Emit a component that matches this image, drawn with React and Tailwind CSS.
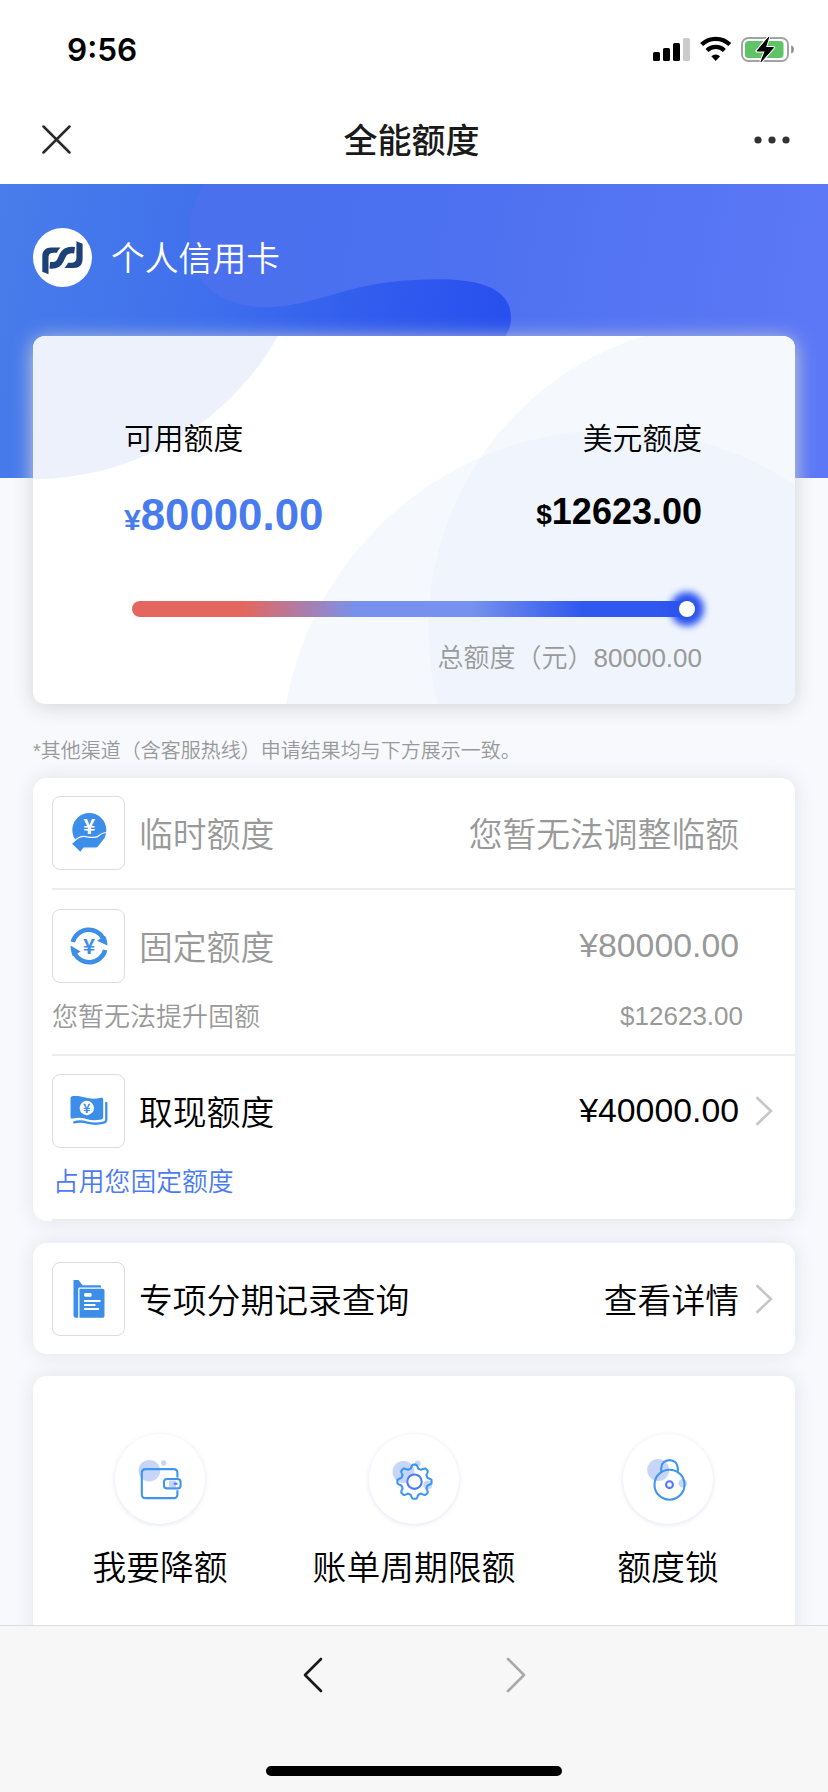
import { clsx } from 'clsx';

const BLUE = '#3d8ee9';

// status bar glyphs: signal, wifi, charging battery
const StatusIcons = () => (
  <svg width="144" height="30" viewBox="0 0 144 30" fill="none">
    <rect x="3" y="17" width="7" height="9" rx="1.6" fill="#000" />
    <rect x="13" y="13" width="7" height="13" rx="1.6" fill="#000" />
    <rect x="23" y="8" width="7" height="18" rx="1.6" fill="#000" />
    <rect x="33" y="3" width="7" height="23" rx="1.6" fill="#cbcbcb" />
    <path d="M51.6 9.6a20 20 0 0 1 28.2 0" stroke="#000" strokeWidth="4.2" />
    <path d="M57 15.4a12.4 12.4 0 0 1 17.4 0" stroke="#000" strokeWidth="4.2" />
    <path d="M61.3 21.2a6.3 6.3 0 0 1 8.800 0L65.700 26z" fill="#000" />
    <rect x="92" y="3" width="46" height="23" rx="6.5" stroke="#a2a2a2" strokeWidth="1.9" />
    <rect x="95" y="6" width="38.5" height="17" rx="3.5" fill="#5fc466" />
    <path d="M141.2 10.2c1.8.7 2.7 2.2 2.7 4.2s-.9 3.500-2.700 4.200z" fill="#8e8e8e" />
    <path
      d="M118.800 2 107 16h8.200l-4.200 10.800L123.600 12.600h-8.200z"
      fill="#000"
      stroke="#fff"
      strokeWidth="3"
      strokeLinejoin="round"
    />
    <path d="M118.800 2 107 16h8.200l-4.200 10.800L123.600 12.600h-8.200z" fill="#000" stroke="#000" strokeWidth="1" strokeLinejoin="round" />
  </svg>
);

const BankLogo = () => (
  <svg width="59" height="59" viewBox="0 0 59 59" fill="none">
    <circle cx="29.5" cy="29.5" r="29.5" fill="#fff" />
    <path
      d="M9.300 43.800V28.500c0-5.800 3.400-9 8.800-9h9.400c-1.500 1.500-2.800 3.400-3.600 5.300h-3.200c-3.400 0-5.200 1.600-5.200 4.500v17z"
      fill="#1d4077"
    />
    <path
      d="M49.600 15.800v15.300c0 5.800-3.400 9-8.800 9h-9.400c1.500-1.500 2.800-3.400 3.600-5.300h3.200c3.400 0 5.200-1.600 5.200-4.500v-17z"
      fill="#1d4077"
    />
    <path
      d="M16.800 38.300c5.600.6 8.200-1.200 10.200-5.600l2.400-5.600c2.200-4.800 5.600-6.400 12-5.500"
      stroke="#fff"
      strokeWidth="7.800"
    />
    <path
      d="M16.800 37.300c5.600.6 8.600-.8 10.600-5l2.400-5c2.200-4.600 5.600-6 11.800-5.100"
      stroke="#1d4077"
      strokeWidth="6.600"
    />
  </svg>
);

const HeroBackground = () => (
  <svg className="absolute inset-x-0 top-0" width="828" height="294" viewBox="0 0 828 294">
    <defs>
      <linearGradient id="heroBase" gradientUnits="userSpaceOnUse" x1="0" y1="0" x2="510" y2="90">
        <stop offset="0" stopColor="#487dea" />
        <stop offset="0.42" stopColor="#4070ed" />
        <stop offset="0.75" stopColor="#315cee" />
        <stop offset="1" stopColor="#2850ee" />
      </linearGradient>
      <linearGradient id="heroBlob" gradientUnits="userSpaceOnUse" x1="190" y1="0" x2="828" y2="110">
        <stop offset="0" stopColor="#4a70ed" />
        <stop offset="0.35" stopColor="#4b70f0" />
        <stop offset="1" stopColor="#5c78f6" />
      </linearGradient>
    </defs>
    <rect width="828" height="294" fill="url(#heroBase)" />
    <path
      d="M205 0C184 28 187 70 200 94c14 20 36 29 66 29 48 0 80-24 148-27 52-3 97 2 97 38 0 18-12 26-34 48v112h351V0z"
      fill="url(#heroBlob)"
    />
  </svg>
);

const CardBackground = () => (
  <svg className="absolute inset-0" width="762" height="368" viewBox="0 0 762 368">
    <defs>
      <clipPath id="cardArc">
        <circle cx="701.700" cy="292.400" r="306.200" />
      </clipPath>
    </defs>
    <circle cx="0" cy="-138.400" r="281.400" fill="#edf1fc" />
    <circle cx="701.700" cy="292.400" r="306.200" fill="#f5f8fd" />
    <circle cx="579.300" cy="425.400" r="331.300" fill="#f5f8fd" />
    <circle cx="579.300" cy="425.400" r="331.300" fill="#f0f5fd" clipPath="url(#cardArc)" />
  </svg>
);

const YenText = ({ x, y, size, fill }) => (
  <text
    x={x}
    y={y}
    fontSize={size}
    fill={fill}
    textAnchor="middle"
    fontWeight="700"
    fontFamily="Noto Sans CJK SC, sans-serif"
  >
    ¥
  </text>
);

const TempIcon = () => (
  <svg width="40" height="40" viewBox="0 0 40 40">
    <circle cx="20.300" cy="17" r="17" fill={BLUE} />
    <YenText x="20.300" y="20.500" size="20.500" fill="#fff" />
    <path
      d="M2.200 30.800L8.400 25.400C11 23.400 15 23.200 18.200 23.800C22 24.400 26 25 28.600 23.600C31 21.600 34 18.800 38 20L36.200 25L29.600 33.600Q28.600 35.200 26.600 35.200H14.800L11.500 39.600z"
      fill={BLUE}
      stroke="#fff"
      strokeWidth="1.200"
      strokeLinejoin="round"
    />
  </svg>
);

const FixedIcon = () => (
  <svg width="40" height="40" viewBox="0 0 40 40">
    <path d="M3.800 16a16.600 16.600 0 0 1 30.800-3.300" fill="none" stroke={BLUE} strokeWidth="4.600" />
    <path d="M28 14.800l8-5c1.600 2.800 2.400 6 2.400 9.600z" fill={BLUE} />
    <path d="M36.200 24A16.600 16.600 0 0 1 5.400 27.300" fill="none" stroke={BLUE} strokeWidth="4.600" />
    <path d="M11.500 25.500L4 30.400C2.400 27.400 1.600 24 1.600 19.600z" fill={BLUE} />
    <YenText x="20" y="27.500" size="20.500" fill={BLUE} />
  </svg>
);

const CashIcon = () => (
  <svg width="40" height="40" viewBox="0 0 40 40">
    <path
      d="M1.500 7.500c0-1.600 1-2.500 2.800-2.500 5-.3 8 .3 12 1.600 5 1.600 10 1.300 15.700.2 1.500-.3 2.200.3 2.200 1.500v18c0 1.300-.7 2-2 2.300-5.500 1.200-10 1-15-.6-4.500-1.500-8.500-1.500-13.200-.5-1.600.4-2.500-.2-2.500-1.600z"
      fill={BLUE}
    />
    <circle cx="17.800" cy="17" r="7.200" fill="#fff" />
    <YenText x="17.800" y="21.500" size="12.500" fill={BLUE} />
    <path d="M37.300 12v16.500c0 2-1 2.800-2.800 3.200-5 1.300-11 1.300-16 0-5-1.500-9-1.600-13.300-.4" fill="none" stroke={BLUE} strokeWidth="2.300" strokeLinecap="round" />
  </svg>
);

const RecordIcon = () => (
  <svg width="40" height="40" viewBox="0 0 40 40">
    <path d="M4.500 1h5l4 5.200h17.300c.8 0 1.200.4 1.200 1.200v1H10.800c-1 0-1.600.6-1.600 1.600v28.700H7c-1.600 0-2.500-.9-2.500-2.500z" fill={BLUE} />
    <path d="M10.500 9.700h22.700c1.500 0 2.300.8 2.300 2.300v24.400c0 1.500-.8 2.300-2.300 2.300H10.500z" fill={BLUE} />
    <rect x="15.200" y="14" width="7.400" height="3.800" rx="1.200" fill="#fff" />
    <path d="M15.800 22h15M15.800 26h10M15.800 30h13.400" stroke="#fff" strokeWidth="1.900" strokeLinecap="round" />
  </svg>
);

const WalletIcon = () => (
  <svg className="-m-px" width="92" height="92" viewBox="0 0 92 92" fill="none">
    <circle cx="35.300" cy="37.700" r="10.800" fill="#c6d5f8" />
    <circle cx="49.700" cy="30" r="2.700" fill="#c6d5f8" />
    <path
      d="M63.400 44.500V40c0-2.400-1.400-3.900-3.900-3.900H31.700c-2.500 0-3.900 1.500-3.900 3.900v21.200c0 2.400 1.400 3.900 3.900 3.900h27.800c2.500 0 3.900-1.500 3.900-3.900v-4"
      stroke="#3f95f0"
      strokeWidth="2.100"
    />
    <rect x="50" y="46" width="16.600" height="9.400" rx="3" fill="#fff" stroke="#3f95f0" strokeWidth="2.100" />
    <rect x="55" y="47.500" width="7" height="6.500" fill="#c6d5f8" />
    <path d="M59.800 50.700h3.600" stroke="#4d70ff" strokeWidth="2" />
  </svg>
);

// eight rounded teeth traced around the hub
const gearPoints = Array.from({ length: 180 }, (_, i) => {
  const a = (i * Math.PI) / 90;
  const wave = Math.max(-1, Math.min(1, Math.cos(a * 8) * 1.5));
  const r = 15.3 + 1.8 * wave;
  return `${(46.5 + r * Math.cos(a)).toFixed(2)},${(48.7 + r * Math.sin(a)).toFixed(2)}`;
}).join(' ');

const GearIcon = () => (
  <svg className="-m-px" width="92" height="92" viewBox="0 0 92 92" fill="none">
    <circle cx="35.500" cy="39" r="11" fill="#c6d5f8" />
    <circle cx="49.800" cy="30.500" r="2.900" fill="#c6d5f8" />
    <circle cx="59.800" cy="52" r="4.500" fill="#c6d5f8" />
    <polygon points={gearPoints} stroke="#3f95f0" strokeWidth="2.100" strokeLinejoin="round" />
    <circle cx="46.500" cy="48.700" r="7.200" fill="#fff" stroke="#4d7afc" strokeWidth="2.100" />
  </svg>
);

const LockIcon = () => (
  <svg className="-m-px" width="92" height="92" viewBox="0 0 92 92" fill="none">
    <circle cx="36.200" cy="37" r="11" fill="#c6d5f8" />
    <circle cx="60.800" cy="50.300" r="4.300" fill="#c6d5f8" />
    <circle cx="47.500" cy="51.700" r="15" stroke="#3f95f0" strokeWidth="2.100" />
    <path d="M39.200 39.300v-4c0-5 3.600-8.200 8.300-8.200s8.300 3.200 8.300 8.200v4" stroke="#3f95f0" strokeWidth="2.100" />
    <circle cx="47.500" cy="51.700" r="3.400" stroke="#4d7afc" strokeWidth="2.100" />
  </svg>
);

const Chevron = () => (
  <svg width="18" height="30" viewBox="0 0 18 30" fill="none">
    <path d="M1.500 1.200L16 15 1.500 28.800" stroke="#c6c6cb" strokeWidth="2.600" />
  </svg>
);

const RowHeader = ({ icon, title, value, muted, arrow, numeric }) => (
  <div className={clsx('flex items-center', muted ? 'text-[#999]' : 'text-black')}>
    <div className="flex h-[74px] w-[73px] shrink-0 items-center justify-center rounded-lg border border-[#dcdcdc]">
      {icon}
    </div>
    <span className="ml-[14px] pt-[3px] text-[33.8px] leading-[48px]">{title}</span>
    <span className={clsx('ml-auto text-[33.8px] leading-[48px]', numeric ? 'pb-[2px]' : 'pt-[3px]')}>{value}</span>
    <div className="flex w-[56px] justify-start pl-4">{arrow && <Chevron />}</div>
  </div>
);

const actions = [
  { label: '我要降额', icon: <WalletIcon /> },
  { label: '账单周期限额', icon: <GearIcon /> },
  { label: '额度锁', icon: <LockIcon /> },
];

export default function App() {
  return (
    <div className="flex h-[1792px] w-[828px] flex-col overflow-hidden bg-[#f7f9fd] font-['Liberation_Sans','Noto_Sans_CJK_SC',sans-serif] font-[350] text-black">
      {/* Status bar */}
      <div className="flex h-[100px] shrink-0 items-center justify-between bg-white pr-[34px] pl-[67px]">
        <span className="font-[Inter,sans-serif] text-[31.5px] leading-10 font-semibold">9:56</span>
        <StatusIcons />
      </div>

      {/* Title bar */}
      <div className="flex h-[84px] shrink-0 items-start justify-between bg-white pr-[38px] pl-[42px]">
        <svg className="mt-[25px]" width="29" height="29" viewBox="0 0 29 29">
          <path d="M1.500 1.500l26 26M27.500 1.500l-26 26" stroke="#2a2a2a" strokeWidth="2.500" strokeLinecap="round" />
        </svg>
        <h1 className="mt-[17px] mr-[2px] text-[34px] leading-[48px] font-medium text-[#1a1a1a]">全能额度</h1>
        <svg className="mt-9" width="36" height="8" viewBox="0 0 36 8" fill="#333">
          <circle cx="4" cy="4" r="3.600" />
          <circle cx="18" cy="4" r="3.600" />
          <circle cx="32" cy="4" r="3.600" />
        </svg>
      </div>

      {/* Page body */}
      <main className="relative flex-1 overflow-hidden">
        <HeroBackground />
        <div className="relative px-[33px]">
          <div className="flex items-center gap-[19px] pt-[44px] text-white">
            <BankLogo />
            <span className="pt-[3px] text-[33.8px] leading-[48px]">个人信用卡</span>
          </div>

          {/* Limit summary */}
          <section className="relative mt-[49px] h-[368px] rounded-xl bg-white shadow-[0_3px_20px_#d4d4d4]">
            <div className="absolute inset-0 overflow-hidden rounded-xl">
              <CardBackground />
            </div>
            <div className="relative pt-[82px] pr-[93px] pl-[91px]">
              <div className="flex justify-between text-[29.800px] leading-[42px]">
                <span>可用额度</span>
                <span>美元额度</span>
              </div>
              <div className="flex h-[75px] justify-between pt-[25px] font-bold">
                <span className="text-[43.800px] leading-[60px] text-[#487bee]">
                  <span className="text-[30px]">¥</span>80000.00
                </span>
                <span className="text-[36px] leading-[54px]">
                  <span className="text-[28px]">$</span>12623.00
                </span>
              </div>
              <div className="mt-[66px] ml-2 flex h-4 w-[563px] justify-end rounded-full bg-[linear-gradient(90deg,#e4675f_20%,#7792ee_40%,#7792ee_60%,#3058ee_80%)]">
                <div className="h-4 w-4 rounded-full bg-white shadow-[0_0_7px_9px_#2b53ee]" />
              </div>
              <p className="mt-[21px] text-right text-[26px] leading-10 text-[#999]">总额度（元）80000.00</p>
            </div>
          </section>

          <p className="mt-[33px] text-[20px] leading-[28px] text-[#999]">
            *其他渠道（含客服热线）申请结果均与下方展示一致。
          </p>

          <section className="mt-[13px] h-[443px] rounded-[14px] bg-white pl-[19px] shadow-[0_0_20px_#e2e3e8]">
            <div className="h-[112px] border-b-2 border-[#ececee] pt-[18px]">
              <RowHeader icon={<TempIcon />} title="临时额度" value="您暂无法调整临额" muted />
            </div>
            <div className="h-[166px] border-b-2 border-[#ececee] pt-[19px] text-[#999]">
              <RowHeader icon={<FixedIcon />} title="固定额度" value="¥80000.00" muted numeric />
              <div className="mt-[13px] flex justify-between pr-[52px] text-[26px] leading-10">
                <span className="pt-px">您暂无法提升固额</span>
                <span>$12623.00</span>
              </div>
            </div>
            <div className="h-[165px] border-b-2 border-[#ececee] pt-[18px]">
              <RowHeader icon={<CashIcon />} title="取现额度" value="¥40000.00" arrow numeric />
              <p className="mt-[14px] ml-px text-[25.8px] leading-10 text-[#4a7bf5]">占用您固定额度</p>
            </div>
          </section>

          <section className="mt-[22px] h-[111px] rounded-[14px] bg-white pt-[19px] pl-[19px] shadow-[0_0_20px_#e2e3e8]">
            <RowHeader icon={<RecordIcon />} title="专项分期记录查询" value="查看详情" arrow />
          </section>

          <section className="mt-[22px] grid h-[300px] grid-cols-3 rounded-[14px] bg-white pt-[58px] shadow-[0_0_20px_#e2e3e8]">
            {actions.map((item) => (
              <div key={item.label} className="flex flex-col items-center">
                <div className="h-[90px] w-[90px] rounded-full bg-white shadow-[0_1px_5px_#e2e3f6]">{item.icon}</div>
                <span className="mt-[20px] text-[33.800px] leading-[48px]">{item.label}</span>
              </div>
            ))}
          </section>
        </div>
      </main>

      {/* Browser toolbar */}
      <footer className="relative h-[167px] shrink-0 border-t border-[#dcdddf] bg-[#f7f7f7]">
        <div className="flex justify-center gap-[183px] pt-[31px]">
          <svg width="20" height="36" viewBox="0 0 20 36" fill="none">
            <path d="M18 2L2 18l16 16" stroke="#1a1a1a" strokeWidth="2.600" strokeLinecap="round" strokeLinejoin="round" />
          </svg>
          <svg width="20" height="36" viewBox="0 0 20 36" fill="none">
            <path d="M2 2l16 16L2 34" stroke="#a9a9a9" strokeWidth="2.600" strokeLinecap="round" strokeLinejoin="round" />
          </svg>
        </div>
        <div className="mx-auto mt-[73px] h-[10px] w-[296px] rounded-full bg-black" />
      </footer>
    </div>
  );
}
